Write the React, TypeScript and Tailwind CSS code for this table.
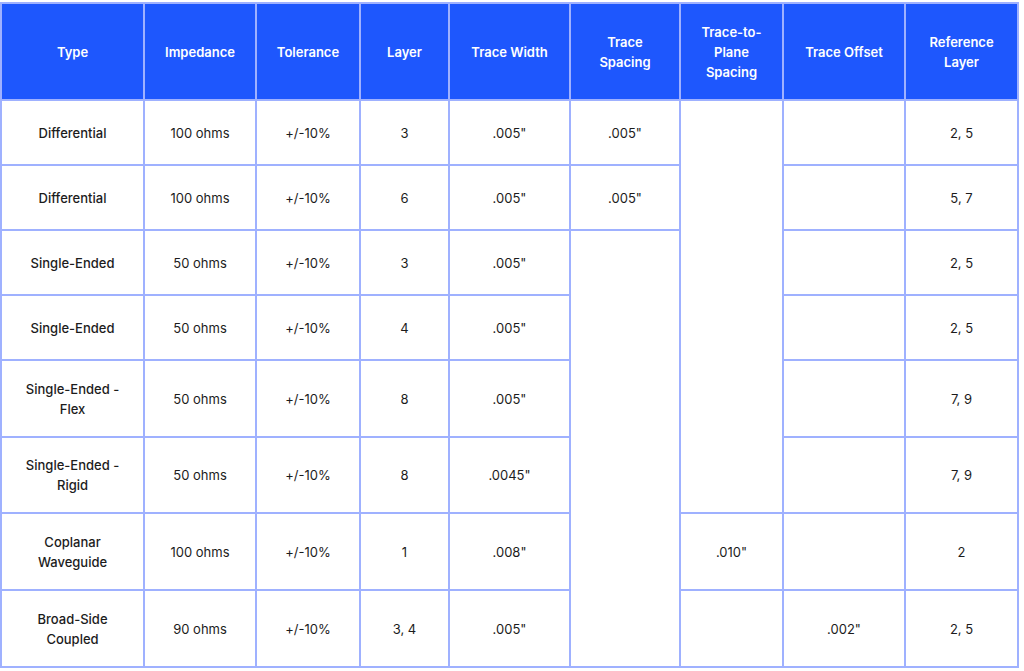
import type { ReactNode } from 'react'

const cell = 'border-2 border-[#9fb1ff] text-center align-middle px-2 text-[13px] leading-5 text-[#1c1c1c]'
const head = 'border-2 border-[#9fb1ff] bg-[#1e57fd] text-center align-middle px-2 text-[13px] leading-5 font-semibold text-white'

function Td({ children, rowSpan, strong }: { children?: ReactNode; rowSpan?: number; strong?: boolean }) {
  return (
    <td rowSpan={rowSpan} className={strong ? `${cell} font-medium` : cell}>
      {children}
    </td>
  )
}

export default function App() {
  return (
    <div className="w-[1024px] h-[671px] bg-white pt-[2px]" style={{ fontFamily: 'Inter, "Noto Sans", sans-serif' }}>
      <table className="table-fixed border-collapse w-[1017px]">
        <colgroup>
          <col className="w-[143px]" />
          <col className="w-[112px]" />
          <col className="w-[104px]" />
          <col className="w-[89px]" />
          <col className="w-[121px]" />
          <col className="w-[110px]" />
          <col className="w-[103px]" />
          <col className="w-[122px]" />
          <col className="w-[113px]" />
        </colgroup>
        <thead>
          <tr className="h-[97px]">
            <th className={head}>Type</th>
            <th className={head}>Impedance</th>
            <th className={head}>Tolerance</th>
            <th className={head}>Layer</th>
            <th className={head}>Trace Width</th>
            <th className={head}>Trace<br />Spacing</th>
            <th className={head}>Trace-to-<br />Plane<br />Spacing</th>
            <th className={head}>Trace Offset</th>
            <th className={head}>Reference<br />Layer</th>
          </tr>
        </thead>
        <tbody>
          <tr className="h-[65px]">
            <Td strong>Differential</Td>
            <Td>100 ohms</Td>
            <Td>+/-10%</Td>
            <Td>3</Td>
            <Td>.005"</Td>
            <Td>.005"</Td>
            <Td rowSpan={6} />
            <Td />
            <Td>2, 5</Td>
          </tr>
          <tr className="h-[65px]">
            <Td strong>Differential</Td>
            <Td>100 ohms</Td>
            <Td>+/-10%</Td>
            <Td>6</Td>
            <Td>.005"</Td>
            <Td>.005"</Td>
            <Td />
            <Td>5, 7</Td>
          </tr>
          <tr className="h-[65px]">
            <Td strong>Single-Ended</Td>
            <Td>50 ohms</Td>
            <Td>+/-10%</Td>
            <Td>3</Td>
            <Td>.005"</Td>
            <Td rowSpan={6} />
            <Td />
            <Td>2, 5</Td>
          </tr>
          <tr className="h-[65px]">
            <Td strong>Single-Ended</Td>
            <Td>50 ohms</Td>
            <Td>+/-10%</Td>
            <Td>4</Td>
            <Td>.005"</Td>
            <Td />
            <Td>2, 5</Td>
          </tr>
          <tr className="h-[77px]">
            <Td strong>Single-Ended -<br />Flex</Td>
            <Td>50 ohms</Td>
            <Td>+/-10%</Td>
            <Td>8</Td>
            <Td>.005"</Td>
            <Td />
            <Td>7, 9</Td>
          </tr>
          <tr className="h-[76px]">
            <Td strong>Single-Ended -<br />Rigid</Td>
            <Td>50 ohms</Td>
            <Td>+/-10%</Td>
            <Td>8</Td>
            <Td>.0045"</Td>
            <Td />
            <Td>7, 9</Td>
          </tr>
          <tr className="h-[77px]">
            <Td strong>Coplanar<br />Waveguide</Td>
            <Td>100 ohms</Td>
            <Td>+/-10%</Td>
            <Td>1</Td>
            <Td>.008"</Td>
            <Td>.010"</Td>
            <Td />
            <Td>2</Td>
          </tr>
          <tr className="h-[77px]">
            <Td strong>Broad-Side<br />Coupled</Td>
            <Td>90 ohms</Td>
            <Td>+/-10%</Td>
            <Td>3, 4</Td>
            <Td>.005"</Td>
            <Td />
            <Td>.002"</Td>
            <Td>2, 5</Td>
          </tr>
        </tbody>
      </table>
    </div>
  )
}
